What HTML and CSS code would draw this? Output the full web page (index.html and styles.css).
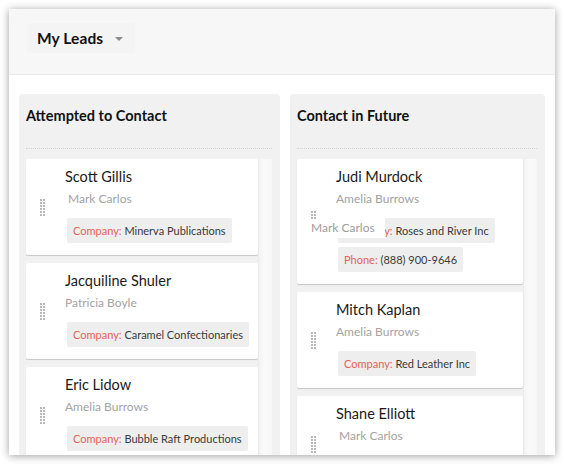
FILE: index.html
```html
<!DOCTYPE html>
<html>
<head>
<meta charset="utf-8">
<link rel="stylesheet" href="styles.css">
</head>
<body>
<div class="window">
  <header class="topbar">
    <div class="view-select">
      <span class="view-name">My Leads</span>
      <span class="caret"></span>
    </div>
  </header>
  <main class="board">
    <section class="column">
      <h2 class="column-title">Attempted to Contact</h2>
      <div class="lane">
        <div class="cards">
          <div class="card">
            <div class="grip"><span class="handle"></span></div>
            <div class="card-body">
              <div class="lead-name">Scott Gillis</div>
              <div class="owner indent">Mark Carlos</div>
              <div class="field"><span class="label">Company:</span> Minerva Publications</div>
            </div>
          </div>
          <div class="card">
            <div class="grip"><span class="handle"></span></div>
            <div class="card-body">
              <div class="lead-name">Jacquiline Shuler</div>
              <div class="owner">Patricia Boyle</div>
              <div class="field"><span class="label">Company:</span> Caramel Confectionaries</div>
            </div>
          </div>
          <div class="card">
            <div class="grip"><span class="handle"></span></div>
            <div class="card-body">
              <div class="lead-name">Eric Lidow</div>
              <div class="owner">Amelia Burrows</div>
              <div class="field"><span class="label">Company:</span> Bubble Raft Productions</div>
            </div>
          </div>
        </div>
        <div class="track"></div>
      </div>
    </section>
    <section class="column">
      <h2 class="column-title">Contact in Future</h2>
      <div class="lane">
        <div class="cards">
          <div class="card">
            <div class="grip"></div>
            <div class="card-body">
              <div class="lead-name">Judi Murdock</div>
              <div class="owner">Amelia Burrows</div>
              <div class="field"><span class="label">Company:</span> Roses and River Inc</div>
              <div class="field"><span class="label">Phone:</span> (888) 900-9646</div>
            </div>
            <span class="ghost-handle"></span>
            <span class="ghost-label">Mark Carlos</span>
          </div>
          <div class="card">
            <div class="grip"><span class="handle"></span></div>
            <div class="card-body">
              <div class="lead-name">Mitch Kaplan</div>
              <div class="owner">Amelia Burrows</div>
              <div class="field"><span class="label">Company:</span> Red Leather Inc</div>
            </div>
          </div>
          <div class="card">
            <div class="grip"><span class="handle"></span></div>
            <div class="card-body">
              <div class="lead-name">Shane Elliott</div>
              <div class="owner indent">Mark Carlos</div>
              <div class="field field-cut"></div>
            </div>
          </div>
        </div>
        <div class="track"></div>
      </div>
    </section>
  </main>
</div>
</body>
</html>
```
FILE: styles.css
```css
* { box-sizing: border-box; }
html, body { margin: 0; padding: 0; }
body {
  background: #ffffff;
  font-family: Lato, "Open Sans", "Liberation Sans", sans-serif;
  color: #222;
}
.window {
  margin: 9px;
  width: 546px;
  height: 446px;
  overflow: hidden;
  background: #fff;
  box-shadow: 0 1px 8px rgba(0,0,0,0.38);
}
.topbar {
  height: 66px;
  background: #f7f7f7;
  border-bottom: 1px solid #e9e9e9;
  padding: 14px 0 0 18px;
}
.view-select {
  display: inline-flex;
  align-items: center;
  height: 30px;
  padding: 0 12px 0 10px;
  background: #f4f4f4;
  border-radius: 3px;
}
.view-name {
  font-size: 15.5px;
  font-weight: 700;
  color: #111;
  letter-spacing: 0.1px;
}
.caret {
  margin-left: 12px;
  width: 0; height: 0;
  border-left: 4px solid transparent;
  border-right: 4px solid transparent;
  border-top: 4px solid #8a8a8a;
  margin-top: 1px;
}
.board {
  display: grid;
  grid-template-columns: 261px 255px;
  column-gap: 10px;
  padding: 19px 10px 0;
  height: 380px;
}
.column {
  background: #f1f1f1;
  border-radius: 4px 4px 0 0;
  padding: 0 8px 0 7px;
  display: flex;
  flex-direction: column;
}
.column-title {
  margin: 0;
  height: 55px;
  padding-top: 13px;
  font-size: 14.5px;
  line-height: 18px;
  font-weight: 700;
  color: #111;
  border-bottom: 1px dotted #d2d2d2;
}
.lane {
  display: flex;
  margin-top: 10px;
  flex: 1;
}
.cards { flex: 1; min-width: 0; }
.track {
  width: 14px;
  background: linear-gradient(to right, #f3f3f3, #fafafa 40%, #f7f7f7);
  border-left: 1px solid #ececec;
}
.card {
  position: relative;
  display: flex;
  background: #fff;
  border-radius: 2px;
  box-shadow: 0 1px 1px rgba(0,0,0,0.18);
  margin-bottom: 8px;
}
.grip {
  width: 39px;
  flex: none;
  display: flex;
  align-items: center;
  padding-left: 14px;
}
.handle, .ghost-handle {
  display: block;
  width: 5px;
  height: 17px;
  background-color: #b8b8b8;
  background-image:
    linear-gradient(to right, transparent 2px, #fff 2px),
    linear-gradient(to bottom, transparent 2px, #fff 2px);
  background-size: 3px 3px;
}
.card-body {
  padding: 9px 0 12px;
  min-width: 0;
}
.lead-name {
  font-size: 14.5px;
  line-height: 18px;
  color: #1a1a1a;
  white-space: nowrap;
}
.owner {
  margin-top: 5px;
  font-size: 12px;
  line-height: 16px;
  color: #a3a3a3;
  white-space: nowrap;
}
.owner.indent { padding-left: 3px; }
.field {
  display: inline-block;
  margin: 11px 0 0 2px;
  height: 25px;
  line-height: 25px;
  padding: 0 6px;
  background: #eeeeee;
  border-radius: 2px;
  font-size: 11px;
  color: #3a3a3a;
  white-space: nowrap;
  vertical-align: top;
}
.field + .field { margin-top: 4px; display: table; }
.field-cut { width: 164px; }
.label { color: #e3625a; }
.ghost-handle {
  position: absolute;
  left: 14px;
  top: 52px;
  height: 8px;
}
.ghost-label {
  position: absolute;
  left: 14px;
  top: 59px;
  width: 74px;
  height: 20px;
  line-height: 20px;
  font-size: 12px;
  color: #9c9c9c;
  background: linear-gradient(to right, transparent 27px, #fff 27px);
  white-space: nowrap;
}
```
